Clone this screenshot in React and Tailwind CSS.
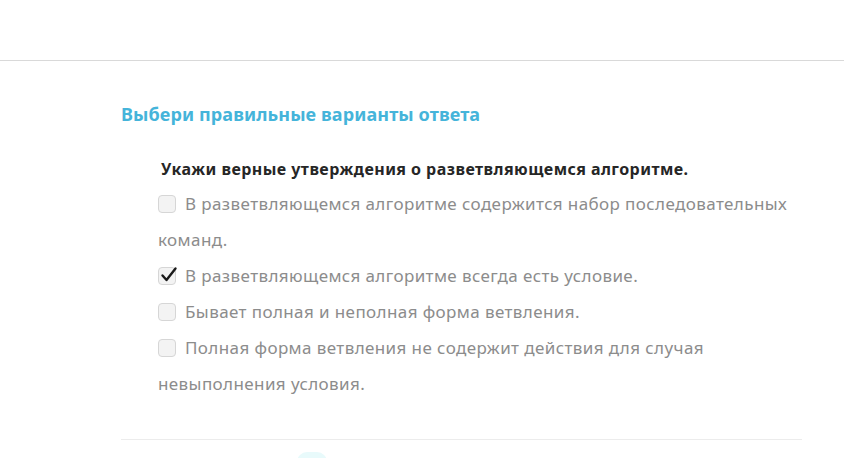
import { useState } from "react";

const options = [
  { text: "В разветвляющемся алгоритме содержится набор последовательных команд.", checked: false },
  { text: "В разветвляющемся алгоритме всегда есть условие.", checked: true },
  { text: "Бывает полная и неполная форма ветвления.", checked: false },
  { text: "Полная форма ветвления не содержит действия для случая невыполнения условия.", checked: false },
];

function Box({ checked, onClick }) {
  return (
    <span
      onClick={onClick}
      className="relative inline-block align-[-3px] w-[18px] h-[18px] mr-[9px] rounded-[4px] border border-[#d6d6d6] bg-[#f3f3f3] cursor-pointer"
    >
      {checked && (
        <svg className="absolute left-[1px] top-[-2px]" width="18" height="18" viewBox="0 0 18 18" fill="none">
          <path d="M2.5 9.5 L6.5 14 L15.5 2.5" stroke="#1a1a1a" strokeWidth="2.4" strokeLinecap="round" strokeLinejoin="round" />
        </svg>
      )}
    </span>
  );
}

export default function App() {
  const [state, setState] = useState(options.map((o) => o.checked));

  return (
    <div className="w-[844px] h-[458px] overflow-hidden bg-white font-['Noto_Sans',sans-serif]">
      <div className="h-[61px] border-b border-[#d9d9d9]" />

      <div className="mx-[121px] w-[681px]">
        <h2 className="pt-[40px] text-[18px] leading-[26px] font-bold text-[#45b4da] tracking-[0.1px]">
          Выбери правильные варианты ответа
        </h2>

        <div className="pl-[37px] pt-[30px]">
          <p className="pl-[3px] text-[16px] leading-[24px] font-bold text-[#262626] tracking-[0.45px]">
            Укажи верные утверждения о разветвляющемся алгоритме.
          </p>

          <div className="mt-[5px] text-[17px] leading-[36px] text-[#8c8c8c] tracking-[0.4px]">
            {options.map((o, i) => (
              <div key={i}>
                <Box
                  checked={state[i]}
                  onClick={() => setState((s) => s.map((v, j) => (j === i ? !v : v)))}
                />
                {o.text}
              </div>
            ))}
          </div>
        </div>

        <div className="mt-[37px] border-t border-[#ececec]" />
        <div className="ml-[176px] mt-[12px] w-[30px] h-[10px] rounded-t-full bg-[#e8fafb]" />
      </div>
    </div>
  );
}
